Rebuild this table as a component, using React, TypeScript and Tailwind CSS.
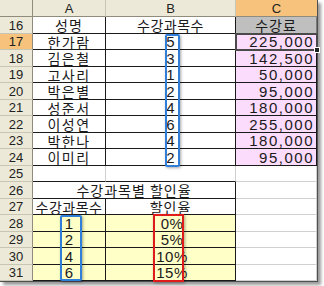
import React from "react";

const names = ["한가람", "김은철", "고사리", "박은별", "성준서", "이성연", "박한나", "이미리"];
const counts = [5, 3, 1, 2, 4, 6, 4, 2];
const fees = ["225,000", "142,500", "50,000", "95,000", "180,000", "255,000", "180,000", "95,000"];
const rates = [
  { n: 1, r: "0%" },
  { n: 2, r: "5%" },
  { n: 4, r: "10%" },
  { n: 6, r: "15%" },
];

// row heights alternate so 16 rows fit like the original sheet
const heights = ["h-[17px]", "h-4"];

const cell = "flex items-center border-r border-b whitespace-nowrap";
const black = "border-[#1a1a1a]";
const grid = "border-[#d0d0d0]";
const num = "font-['Liberation_Sans',sans-serif] text-[15px]";

function Row({ n, idx, active, children }: { n: number; idx: number; active?: boolean; children: React.ReactNode }) {
  return (
    <div className={`grid grid-cols-[33px_73px_130px_81px] ${heights[idx % 2]}`}>
      <div
        className={`flex items-center justify-center border-r border-b border-r-[#8f8c7e] border-b-[#c9c5b5] text-[13px] text-[#222] font-['Liberation_Sans',sans-serif] ${
          active ? "bg-[#f7c27b]" : "bg-[#ece9d8]"
        }`}
      >
        {n}
      </div>
      {children}
    </div>
  );
}

export default function App() {
  return (
    <div className="w-[324px] h-[286px] bg-white overflow-hidden">
      <div className="relative w-[318px] border-r border-b border-[#505050] shadow-[3px_3px_3px_rgba(0,0,0,0.4)] text-[#1a1a1a] font-['Noto_Sans_CJK_KR',sans-serif] text-[14px] leading-none">
        {/* column headers */}
        <div className="grid grid-cols-[33px_73px_130px_81px] h-[17px] text-[13px] text-[#222] font-['Liberation_Sans',sans-serif]">
          <div className="bg-[#ece9d8] border-r border-b border-[#8f8c7e]" />
          <div className="flex items-center justify-center bg-[#ece9d8] border-r border-b border-r-[#c9c5b5] border-b-[#8f8c7e]">A</div>
          <div className="flex items-center justify-center bg-[#ece9d8] border-r border-b border-r-[#c9c5b5] border-b-[#8f8c7e]">B</div>
          <div className="flex items-center justify-center bg-[#f7c27b] border-b border-[#8f8c7e]">C</div>
        </div>

        <Row n={16} idx={0}>
          <div className={`${cell} ${black} justify-center tracking-[1px]`}>성명</div>
          <div className={`${cell} ${black} justify-center tracking-[0.5px]`}>수강과목수</div>
          <div className={`${cell} border-[#7a7a7a] bg-[#bfbfbf] justify-center tracking-[1px]`}>수강료</div>
        </Row>

        {names.map((name, i) => (
          <Row key={name + i} n={17 + i} idx={i + 1} active={i === 0}>
            <div className={`${cell} ${black} justify-center tracking-[1.5px]`}>{name}</div>
            <div className={`${cell} ${black} justify-center ${num}`}>{counts[i]}</div>
            <div className={`${cell} ${black} bg-[#fcdcfc] justify-end pr-[2px] ${num} tracking-[1.5px]`}>{fees[i]}</div>
          </Row>
        ))}

        <Row n={25} idx={9}>
          <div className={`${cell} border-r-[#d0d0d0] border-b-[#1a1a1a]`} />
          <div className={`${cell} border-r-[#d0d0d0] border-b-[#1a1a1a]`} />
          <div className={`${cell} ${grid}`} />
        </Row>

        <Row n={26} idx={10}>
          <div className={`${cell} ${black} col-span-2 justify-center tracking-[1px]`}>수강과목별 할인율</div>
          <div className={`${cell} ${grid}`} />
        </Row>

        <Row n={27} idx={11}>
          <div className={`${cell} ${black} justify-center tracking-[0.5px]`}>수강과목수</div>
          <div className={`${cell} ${black} justify-center tracking-[1px]`}>할인율</div>
          <div className={`${cell} ${grid}`} />
        </Row>

        {rates.map((r, i) => (
          <Row key={r.r} n={28 + i} idx={12 + i}>
            <div className={`${cell} ${black} bg-[#ffffc8] justify-center ${num}`}>{r.n}</div>
            <div className={`${cell} ${black} bg-[#ffffc8] justify-center pl-[3px] ${num} tracking-[0.5px]`}>{r.r}</div>
            <div className={`${cell} ${grid}`} />
          </Row>
        ))}

        {/* active cell C17 */}
        <div className="absolute left-[235px] top-[33px] w-[83px] h-[18px] border-2 border-[#4a4a4a]" />
        <div className="absolute left-[314px] top-[47px] w-[6px] h-[6px] bg-[#222] border border-white" />

        {/* highlight boxes */}
        <div className="absolute left-[165px] top-[34px] w-[15px] h-[133px] border-2 border-[#2f7fd8] rounded-[2px] shadow-[1px_1px_3px_rgba(0,0,0,0.35)]" />
        <div className="absolute left-[60px] top-[215px] w-[22px] h-[66px] border-2 border-[#2f7fd8] rounded-[2px] shadow-[1px_1px_3px_rgba(0,0,0,0.35)]" />
        <div className="absolute left-[153px] top-[214px] w-[31px] h-[68px] border-2 border-[#e01b1b] shadow-[1px_1px_3px_rgba(0,0,0,0.35)]" />
      </div>
    </div>
  );
}
